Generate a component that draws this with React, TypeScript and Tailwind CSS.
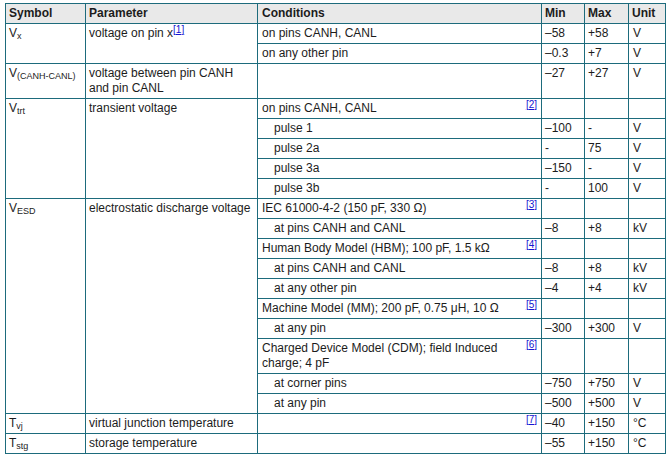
import React from "react";

type Sub = { cond: React.ReactNode; note?: string; indent?: boolean; min?: string; max?: string; unit?: string; tall?: boolean };

type Group = { symbol: React.ReactNode; param: React.ReactNode; rows: Sub[] };

const Note = ({ n }: { n: string }) => (
  <sup className="text-[10px] text-[#1515d0] underline align-top relative top-[-1px] leading-none">[{n}]</sup>
);

const groups: Group[] = [
  {
    symbol: <>V<sub className="text-[9px]">x</sub></>,
    param: <>voltage on pin x<Note n="1" /></>,
    rows: [
      { cond: "on pins CANH, CANL", min: "–58", max: "+58", unit: "V" },
      { cond: "on any other pin", min: "–0.3", max: "+7", unit: "V" },
    ],
  },
  {
    symbol: <>V<sub className="text-[9px]">(CANH-CANL)</sub></>,
    param: <>voltage between pin CANH<br />and pin CANL</>,
    rows: [{ cond: "", min: "–27", max: "+27", unit: "V", tall: true }],
  },
  {
    symbol: <>V<sub className="text-[9px]">trt</sub></>,
    param: "transient voltage",
    rows: [
      { cond: "on pins CANH, CANL", note: "2" },
      { cond: "pulse 1", indent: true, min: "–100", max: "-", unit: "V" },
      { cond: "pulse 2a", indent: true, min: "-", max: "75", unit: "V" },
      { cond: "pulse 3a", indent: true, min: "–150", max: "-", unit: "V" },
      { cond: "pulse 3b", indent: true, min: "-", max: "100", unit: "V" },
    ],
  },
  {
    symbol: <>V<sub className="text-[9px]">ESD</sub></>,
    param: "electrostatic discharge voltage",
    rows: [
      { cond: "IEC 61000-4-2 (150 pF, 330 Ω)", note: "3" },
      { cond: "at pins CANH and CANL", indent: true, min: "–8", max: "+8", unit: "kV" },
      { cond: "Human Body Model (HBM); 100 pF, 1.5 kΩ", note: "4" },
      { cond: "at pins CANH and CANL", indent: true, min: "–8", max: "+8", unit: "kV" },
      { cond: "at any other pin", indent: true, min: "–4", max: "+4", unit: "kV" },
      { cond: "Machine Model (MM); 200 pF, 0.75 μH, 10 Ω", note: "5" },
      { cond: "at any pin", indent: true, min: "–300", max: "+300", unit: "V" },
      { cond: <>Charged Device Model (CDM); field Induced<br />charge; 4 pF</>, note: "6", tall: true },
      { cond: "at corner pins", indent: true, min: "–750", max: "+750", unit: "V" },
      { cond: "at any pin", indent: true, min: "–500", max: "+500", unit: "V" },
    ],
  },
  {
    symbol: <>T<sub className="text-[9px]">vj</sub></>,
    param: "virtual junction temperature",
    rows: [{ cond: "", note: "7", min: "–40", max: "+150", unit: "°C" }],
  },
  {
    symbol: <>T<sub className="text-[9px]">stg</sub></>,
    param: "storage temperature",
    rows: [{ cond: "", min: "–55", max: "+150", unit: "°C" }],
  },
];

const cell = "border border-[#1d6b7c] align-top py-[2px] px-[3px] leading-[15px]";

export default function App() {
  return (
    <div className="bg-white w-[671px] h-[456px] pl-[5px] pt-[3px] text-[12px] text-[#1c1c1c] font-['Liberation_Sans',Arial,sans-serif]">
      <table className="table-fixed border-collapse w-[661px]">
        <colgroup>
          <col className="w-[80px]" />
          <col className="w-[172px]" />
          <col className="w-[284px]" />
          <col className="w-[43px]" />
          <col className="w-[44px]" />
          <col className="w-[37px]" />
        </colgroup>
        <thead>
          <tr className="bg-[#e9e9e9] font-bold text-left">
            <th className={cell}>Symbol</th>
            <th className={cell}>Parameter</th>
            <th className={`${cell} pl-[4px]`}>Conditions</th>
            <th className={cell}>Min</th>
            <th className={cell}>Max</th>
            <th className={cell}>Unit</th>
          </tr>
        </thead>
        <tbody>
          {groups.map((g, gi) =>
            g.rows.map((r, ri) => (
              <tr key={`${gi}-${ri}`} className={r.tall ? "h-[35px]" : "h-[20px]"}>
                {ri === 0 && (
                  <>
                    <td rowSpan={g.rows.length} className={`${cell} whitespace-nowrap`}>{g.symbol}</td>
                    <td rowSpan={g.rows.length} className={cell}>{g.param}</td>
                  </>
                )}
                <td className={`${cell} ${r.indent ? "pl-[16px]" : "pl-[4px]"} pr-[4px]`}>
                  <div className="flex justify-between items-start">
                    <span>{r.cond}</span>
                    {r.note && <Note n={r.note} />}
                  </div>
                </td>
                <td className={cell}>{r.min}</td>
                <td className={cell}>{r.max}</td>
                <td className={`${cell} pl-[4px]`}>{r.unit}</td>
              </tr>
            ))
          )}
        </tbody>
      </table>
    </div>
  );
}
